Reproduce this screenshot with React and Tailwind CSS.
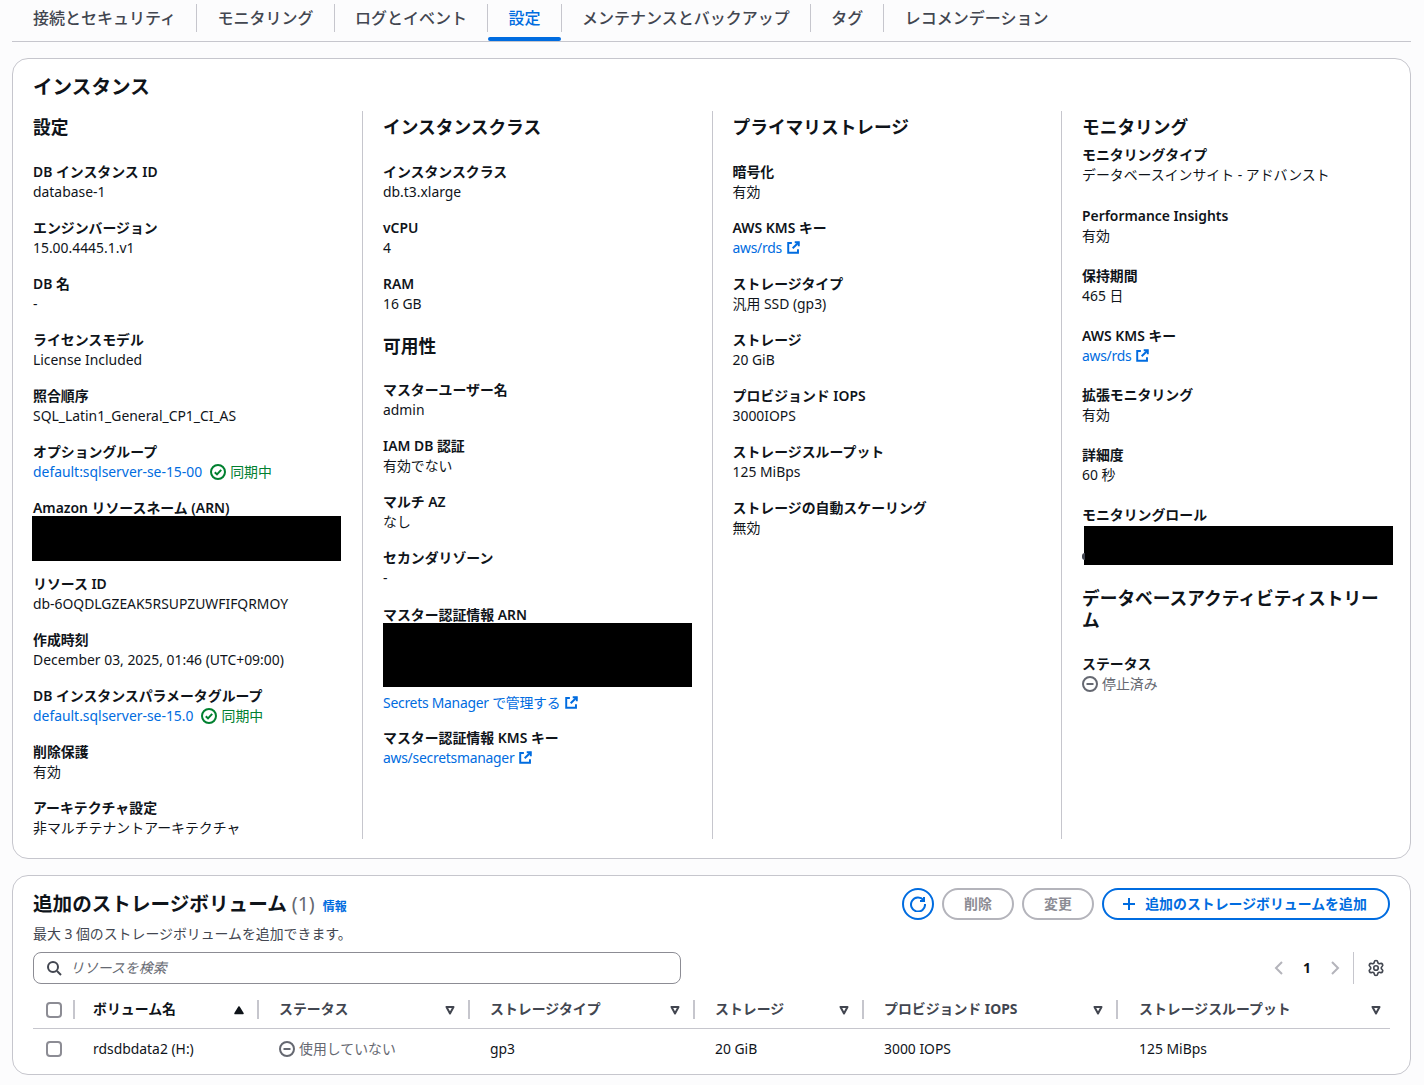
import React from 'react'
import { Settings } from 'lucide-react'

const tabs = ['接続とセキュリティ', 'モニタリング', 'ログとイベント', '設定', 'メンテナンスとバックアップ', 'タグ', 'レコメンデーション']

const ExternalIcon = () => (
  <svg viewBox="0 0 16 16" className="w-[13px] h-[13px] inline-block ml-[5px] align-[-1px]" fill="none" stroke="currentColor" strokeWidth="2.4">
    <path d="M6 2.500H1.500v12h12V10" />
    <path d="M9.500 1.500h5v5" />
    <path d="M14.500 1.500 7 9" />
  </svg>
)

const CheckCircle = () => (
  <svg viewBox="0 0 16 16" className="w-4 h-4 shrink-0" fill="none" stroke="currentColor" strokeWidth="2">
    <circle cx="8" cy="8" r="7" />
    <path d="m4.800 8.200 2.200 2.200 4.200-4.600" />
  </svg>
)

const MinusCircle = () => (
  <svg viewBox="0 0 16 16" className="w-4 h-4 shrink-0" fill="none" stroke="currentColor" strokeWidth="2">
    <circle cx="8" cy="8" r="7" />
    <path d="M4.500 8h7" />
  </svg>
)

const CaretDown = () => (
  <svg viewBox="0 0 12 12" className="w-3 h-3" fill="none" stroke="#424650" strokeWidth="2" strokeLinejoin="round">
    <path d="M2.500 3h7L6 9.500z" />
  </svg>
)

const CaretUp = () => (
  <svg viewBox="0 0 12 12" className="w-3 h-3" fill="#0f141a" stroke="#0f141a" strokeWidth="1.500" strokeLinejoin="round">
    <path d="M2 9.500h8L6 3z" />
  </svg>
)

const Link = ({ children, external }) => (
  <a className={`text-[#006ce0] ${external ? 'tracking-[-0.25px]' : ''}`}>{children}{external && <ExternalIcon />}</a>
)

const Item = ({ label, children, className = 'mb-4' }) => (
  <div className={className}>
    <div className="font-semibold leading-5">{label}</div>
    <div className="leading-5">{children}</div>
  </div>
)

const Heading = ({ children, className = '' }) => (
  <h3 className={`text-[17.7px] font-bold leading-[22px] ${className}`}>{children}</h3>
)

const Synced = ({ name }) => (
  <div className="flex items-center">
    <Link>{name}</Link>
    <span className="ml-2 flex items-center gap-1 text-[#00802f]"><CheckCircle />同期中</span>
  </div>
)

const Stopped = ({ text }) => (
  <span className="flex items-center gap-1 text-[#656871]"><MinusCircle />{text}</span>
)

const Redacted = ({ className }) => <div className={`bg-black w-[309px] ${className}`} />

const Column = ({ children, first }) => (
  <div className={`shrink-0 pt-[5px] pr-[20px] ${first ? 'w-[350px] pl-[21px]' : 'w-[349.5px] pl-5 border-l border-[#c6c6cd]'}`}>
    {children}
  </div>
)

const columns = [
  { label: 'ボリューム名', sort: true, cell: 'pl-[18px] pr-3 border-r-2 border-[#c6c6cd] text-[#0f141a]' },
  { label: 'ステータス', cell: 'pl-5 pr-3 border-r-2 border-[#c6c6cd]' },
  { label: 'ストレージタイプ', cell: 'pl-5 pr-3 border-r-2 border-[#c6c6cd]' },
  { label: 'ストレージ', cell: 'pl-5 pr-3 border-r-2 border-[#c6c6cd]' },
  { label: 'プロビジョンド IOPS', cell: 'pl-5 pr-3 border-r-2 border-[#c6c6cd]' },
  { label: 'ストレージスループット', cell: 'pl-[21px] pr-2' },
]

const Checkbox = () => <span className="block w-4 h-4 rounded-[4px] border-2 border-[#8c8c94] bg-white" />

export default function App() {
  return (
    <div className="min-h-[1085px] bg-[#fcfcfd] pl-3 pr-[13px] text-[13.9px] text-[#0f141a] font-['Noto_Sans','Noto_Sans_CJK_JP',sans-serif] overflow-hidden">
      {/* tabs */}
      <div className="flex h-[42px] border-b border-[#c6c6cd] text-base font-medium text-[#424650]">
        {tabs.map((t, i) => (
          <div key={t} className={`relative h-[41px] pb-[9px] pt-1 ${i === 0 ? 'ml-[0.5px]' : ''}`}>
            <div className={`h-7 flex items-center pl-[20.5px] pr-5 ${i < tabs.length - 1 ? 'border-r border-[#c6c6cd]' : ''} ${t === '設定' ? 'text-[#006ce0]' : ''}`}>{t}</div>
            {t === '設定' && <div className="absolute left-0 right-[1px] bottom-0 h-1 rounded bg-[#006ce0]" />}
          </div>
        ))}
      </div>

      {/* instance panel */}
      <section className="mt-4 h-[801px] rounded-2xl border border-[#c6c6cd] bg-white pt-4 pl-[20px] overflow-hidden">
        <h2 className="text-[19.6px] font-bold leading-6">インスタンス</h2>
        <div className="flex -ml-[21px] mt-[12px] h-[728px]">
          <Column first>
            <Heading className="mb-6">設定</Heading>
            <Item label="DB インスタンス ID">database-1</Item>
            <Item label="エンジンバージョン">15.00.4445.1.v1</Item>
            <Item label="DB 名">-</Item>
            <Item label="ライセンスモデル">License Included</Item>
            <Item label="照合順序">SQL_Latin1_General_CP1_CI_AS</Item>
            <Item label="オプショングループ"><Synced name="default:sqlserver-se-15-00" /></Item>
            <Item label="Amazon リソースネーム (ARN)" className="mb-0" />
            <Redacted className="h-[45px] -mt-[2px] -ml-px mb-[13px]" />
            <Item label="リソース ID">db-6OQDLGZEAK5RSUPZUWFIFQRMOY</Item>
            <Item label="作成時刻">December 03, 2025, 01:46 (UTC+09:00)</Item>
            <Item label="DB インスタンスパラメータグループ"><Synced name="default.sqlserver-se-15.0" /></Item>
            <Item label="削除保護">有効</Item>
            <Item label="アーキテクチャ設定" className="">非マルチテナントアーキテクチャ</Item>
          </Column>
          <Column>
            <Heading className="mb-6">インスタンスクラス</Heading>
            <Item label="インスタンスクラス">db.t3.xlarge</Item>
            <Item label="vCPU">4</Item>
            <Item label="RAM" className="mb-[21px]">16 GB</Item>
            <Heading className="mb-[23px]">可用性</Heading>
            <Item label="マスターユーザー名">admin</Item>
            <Item label="IAM DB 認証">有効でない</Item>
            <Item label="マルチ AZ">なし</Item>
            <Item label="セカンダリゾーン" className="mb-[17px]">-</Item>
            <Item label="マスター認証情報 ARN" className="mb-0" />
            <Redacted className="h-16 -mt-[2px] mb-[6px]" />
            <div className="leading-5 mb-[15px]"><Link external>Secrets Manager で管理する</Link></div>
            <Item label="マスター認証情報 KMS キー"><Link external>aws/secretsmanager</Link></Item>
          </Column>
          <Column>
            <Heading className="mb-6">プライマリストレージ</Heading>
            <Item label="暗号化">有効</Item>
            <Item label="AWS KMS キー"><Link external>aws/rds</Link></Item>
            <Item label="ストレージタイプ">汎用 SSD (gp3)</Item>
            <Item label="ストレージ">20 GiB</Item>
            <Item label="プロビジョンド IOPS">3000IOPS</Item>
            <Item label="ストレージスループット">125 MiBps</Item>
            <Item label="ストレージの自動スケーリング">無効</Item>
          </Column>
          <Column>
            <Heading className="mb-[7px]">モニタリング</Heading>
            <Item label="モニタリングタイプ" className="mb-[21px]">データベースインサイト - アドバンスト</Item>
            <Item label="Performance Insights" className="mb-5">有効</Item>
            <Item label="保持期間" className="mb-5">465 日</Item>
            <Item label="AWS KMS キー" className="mb-[19px]"><Link external>aws/rds</Link></Item>
            <Item label="拡張モニタリング" className="mb-5">有効</Item>
            <Item label="詳細度" className="mb-5">60 秒</Item>
            <Item label="モニタリングロール" className="mb-0" />
            <div className="relative">
              <Redacted className="h-[39px] mt-px ml-[2px] mb-[22px]" />
              <span className="absolute left-0 top-[27px] w-[3px] h-[7px] rounded-l-full bg-[#424650]" />
            </div>
            <Heading className="mb-[23px]">データベースアクティビティストリーム</Heading>
            <Item label="ステータス"><Stopped text="停止済み" /></Item>
          </Column>
        </div>
      </section>

      {/* storage volumes */}
      <section className="mt-4 h-[200px] rounded-2xl border border-[#c6c6cd] bg-white px-5 pt-3">
        <div className="flex items-start justify-between">
          <div className="pt-1">
            <div className="flex items-baseline">
              <h2 className="text-[19.6px] font-bold leading-6">追加のストレージボリューム</h2>
              <span className="ml-[5px] text-[19.6px] text-[#656871] leading-6">(1)</span>
              <a className="ml-2 text-xs font-bold text-[#006ce0]">情報</a>
            </div>
            <p className="mt-[8px] leading-5 text-[#424650]">最大 3 個のストレージボリュームを追加できます。</p>
          </div>
          <div className="flex gap-2 font-bold">
            <button className="w-8 h-8 rounded-full border-2 border-[#006ce0] text-[#006ce0] flex items-center justify-center">
              <svg viewBox="0 0 16 16" className="w-4 h-4" fill="none" stroke="currentColor" strokeWidth="2">
                <path d="M13.500 4.200A7 7 0 1 0 15 8" />
                <path d="M14 1v4h-4" />
              </svg>
            </button>
            <button className="w-[72px] h-8 rounded-full border-2 border-[#b4b4bb] text-[#8c8c94]">削除</button>
            <button className="w-[72px] h-8 rounded-full border-2 border-[#b4b4bb] text-[#8c8c94]">変更</button>
            <button className="w-[288px] h-8 pr-1 rounded-full border-2 border-[#006ce0] text-[#006ce0] flex items-center justify-center gap-2">
              <svg viewBox="0 0 16 16" className="w-4 h-4" fill="none" stroke="currentColor" strokeWidth="2"><path d="M8 2v12M2 8h12" /></svg>
              追加のストレージボリュームを追加
            </button>
          </div>
        </div>

        <div className="flex items-center justify-between mt-2">
          <div className="w-[648px] h-8 rounded-lg border border-[#8c8c94] flex items-center px-3 gap-2 text-[#656871]">
            <svg viewBox="0 0 16 16" className="w-4 h-4 text-[#424650]" fill="none" stroke="currentColor" strokeWidth="2">
              <circle cx="7" cy="7" r="5" />
              <path d="m11 11 4 4" />
            </svg>
            <span className="italic">リソースを検索</span>
          </div>
          <div className="flex items-center h-8">
            <svg viewBox="0 0 16 16" className="w-4 h-4 text-[#b4b4bb]" fill="none" stroke="currentColor" strokeWidth="2"><path d="m11 2-6 6 6 6" /></svg>
            <span className="mx-4 w-2 text-center font-bold">1</span>
            <svg viewBox="0 0 16 16" className="w-4 h-4 text-[#b4b4bb]" fill="none" stroke="currentColor" strokeWidth="2"><path d="m5 2 6 6-6 6" /></svg>
            <div className="ml-[10px] h-8 border-l border-[#c6c6cd]" />
            <Settings className="ml-[13px] mr-[5px] w-[18px] h-[18px] text-[#424650]" strokeWidth={2.2} />
          </div>
        </div>

        <div className="mt-4 pb-[9px] grid grid-cols-[42px_184px_211px_225px_169px_254px_272px] border-b border-[#c6c6cd] font-bold text-[#424650]">
          <div className="h-[19px] flex items-center pl-[13px] border-r-2 border-[#c6c6cd]"><Checkbox /></div>
          {columns.map(c => (
            <div key={c.label} className={`h-[19px] flex items-center justify-between ${c.cell}`}>
              <span>{c.label}</span>
              {c.sort ? <CaretUp /> : <CaretDown />}
            </div>
          ))}
        </div>
        <div className="grid grid-cols-[42px_184px_211px_225px_169px_254px_272px] h-[40px] items-center">
          <div className="pl-[13px]"><Checkbox /></div>
          <div className="pl-[18px]">rdsdbdata2 (H:)</div>
          <div className="pl-5"><Stopped text="使用していない" /></div>
          <div className="pl-5">gp3</div>
          <div className="pl-5">20 GiB</div>
          <div className="pl-5">3000 IOPS</div>
          <div className="pl-[21px]">125 MiBps</div>
        </div>
      </section>
    </div>
  )
}
